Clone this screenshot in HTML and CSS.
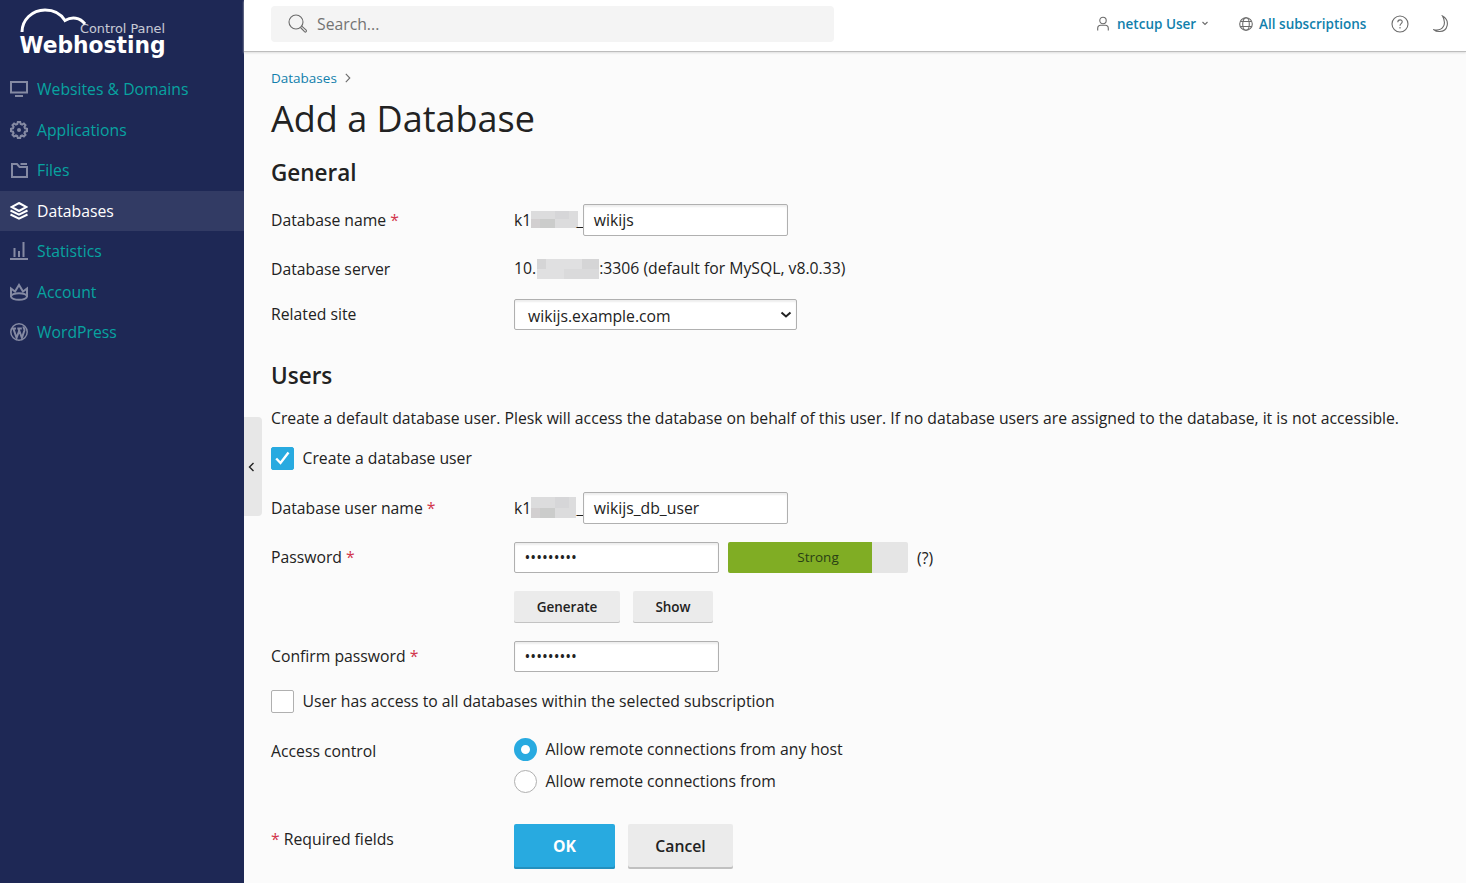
FILE: index.html
```html
<!DOCTYPE html>
<html lang="en">
<head>
<meta charset="utf-8">
<title>Add a Database</title>
<link rel="stylesheet" href="styles.css">
</head>
<body>
<div class="app">
  <aside class="sidebar">
    <svg class="logo" width="180" height="69" viewBox="0 0 180 69">
      <path d="M22 32C22 20 32 10 45 10C55 10 61 14 65 20.500C72 16.500 80 17.500 85 24" fill="none" stroke="#fff" stroke-width="3"/>
      <text class="logo-small" x="80" y="33" textLength="85" lengthAdjust="spacingAndGlyphs">Control Panel</text>
      <text class="logo-big" x="19.500" y="52.500" textLength="146" lengthAdjust="spacingAndGlyphs">Webhosting</text>
    </svg>
    <nav class="nav">
      <a class="nav-item"><svg class="nav-icon" viewBox="0 0 18 18"><path d="M1 2h16v10.500H1zM5 16h8"/></svg>Websites &amp; Domains</a>
      <a class="nav-item"><svg class="nav-icon" viewBox="0 0 18 18"><path d="M7.300 3 7.800 1h2.400l.5 2 1.400.6 1.800-1.100 1.600 1.600-1.100 1.800.6 1.400 2 .5v2.400l-2 .5-.6 1.400 1.100 1.800-1.600 1.600-1.800-1.100-1.400.6-.5 2H7.800l-.5-2-1.400-.6-1.800 1.100-1.600-1.600 1.100-1.800L3 10.700l-2-.5V7.800l2-.5.6-1.400-1.100-1.800 1.600-1.600 1.800 1.100z"/><circle cx="9" cy="9" r="2" fill="currentColor" stroke="none"/></svg>Applications</a>
      <a class="nav-item"><svg class="nav-icon" viewBox="0 0 18 18"><path d="M2 3h5l2.500 3H17v10H2zM10.500 3H17"/></svg>Files</a>
      <a class="nav-item active"><svg class="nav-icon" viewBox="0 0 18 18"><path d="m9 1 7.500 4L9 9 1.500 5zM.5 8.500 9 12.700l8.500-4.200M.5 12.500 9 16.700l8.500-4.200"/></svg>Databases</a>
      <a class="nav-item"><svg class="nav-icon" viewBox="0 0 18 18"><path d="M0 17h18M4.500 6v9M9 9v6M13.500 0v15"/></svg>Statistics</a>
      <a class="nav-item"><svg class="nav-icon" viewBox="0 0 18 18"><path d="M1 14V5.500l4 3L9 2l4 6.500 4-3V14"/><ellipse cx="9" cy="13.500" rx="8" ry="3.300"/></svg>Account</a>
      <a class="nav-item"><svg class="nav-icon" viewBox="0 0 18 18"><circle cx="9" cy="9" r="8.200" stroke-width="1.500"/><path d="M2 5.500h4M7.300 5.500h4.500M3.300 5.500l3.300 9.300L9.100 8M8.500 5.500l3.400 9.300 2.500-7.300c.5-1.700-1.200-2.400-.8-4"/></svg>WordPress</a>
    </nav>
  </aside>
  <div class="page">
    <header class="topbar">
      <div class="search"><svg width="20" height="20" viewBox="0 0 20 20"><circle cx="8" cy="8" r="7"/><path d="m12.500 13.500 4 4.200c1.200 1 2.600-.5 1.700-1.600l-4.400-3.900"/></svg>Search...</div>
      <div class="user"><svg width="12" height="16" viewBox="0 0 12 16"><circle cx="6" cy="4.500" r="3.200"/><path d="M.7 14.500v-2c0-2 1-3.200 3-3.200h4.600c2 0 3 1.200 3 3.200v2"/></svg><span>netcup User</span><svg class="caret" width="6" height="5" viewBox="0 0 6 5"><path d="m.5 1 2.500 2.500L5.500 1"/></svg></div>
      <div class="subs"><svg width="14" height="14" viewBox="0 0 14 14"><circle cx="7" cy="7" r="6.300"/><ellipse cx="7" cy="7" rx="3.300" ry="6.300"/><path d="M1.500 4.500h11M1.500 9.500h11"/></svg><span>All subscriptions</span></div>
      <svg class="help" width="18" height="18" viewBox="0 0 18 18"><circle cx="9" cy="9" r="8"/><path d="M6.800 7.300C6.800 4 11.500 4.300 11.200 7 11 8.700 9 8.700 9 10.700M9 12v1.400"/></svg>
      <svg class="moon" width="16" height="18" viewBox="0 0 16 18"><path d="M9.500 1c8 4.500 5.500 16-3.500 15.500-2 0-3.800-.6-5-1.700C10 16.500 14 9 9.500 1z"/></svg>
    </header>
    <div class="collapse"><svg width="7" height="10" viewBox="0 0 7 10"><path d="M5.500 1 1.500 5l4 4"/></svg></div>
    <main class="content">
      <div class="crumbs"><a>Databases</a><svg width="6" height="10" viewBox="0 0 6 10"><path d="m.8.8 4 4.200-4 4.200"/></svg></div>
      <h1>Add a Database</h1>
      <h2>General</h2>
      <div class="row name-row">
        <label>Database name <i>*</i></label>
        <div class="field"><span>k1</span><span class="mask mask-name"><b></b><b></b><b></b><b></b><b></b><b></b><b></b><b></b></span><span class="under">_</span><div class="input">wikijs</div></div>
      </div>
      <div class="row server-row">
        <label>Database server</label>
        <div class="field"><span>10.</span><span class="mask mask-server"><b></b><b></b><b></b><b></b><b></b><b></b><b></b><b></b></span><span>:3306 (default for MySQL, v8.0.33)</span></div>
      </div>
      <div class="row site-row">
        <label>Related site</label>
        <div class="input select"><span>wikijs.example.com</span><svg width="12" height="8" viewBox="0 0 12 8"><path d="m1.500 1.500 4.500 4 4.500-4"/></svg></div>
      </div>
      <h2 class="users-title">Users</h2>
      <p class="intro">Create a default database user. Plesk will access the database on behalf of this user. If no database users are assigned to the database, it is not accessible.</p>
      <div class="check"><span class="box checked"><svg width="15" height="14" viewBox="0 0 15 14"><path d="m1.200 7.500 4.300 4.500 8-10.500"/></svg></span><span class="caption">Create a database user</span></div>
      <div class="row username-row">
        <label>Database user name <i>*</i></label>
        <div class="field"><span>k1</span><span class="mask mask-user"><b></b><b></b><b></b><b></b><b></b><b></b><b></b><b></b></span><span class="under">_</span><div class="input">wikijs_db_user</div></div>
      </div>
      <div class="row pass-row">
        <label>Password <i>*</i></label>
        <div class="field"><div class="input dots">•••••••••</div><div class="meter"><span>Strong</span></div><span class="hint">(?)</span></div>
      </div>
      <div class="row button-row">
        <div></div>
        <div class="field"><button class="generate">Generate</button><button class="show">Show</button></div>
      </div>
      <div class="row pass-row">
        <label>Confirm password <i>*</i></label>
        <div class="field"><div class="input dots">•••••••••</div></div>
      </div>
      <div class="check all-check"><span class="box"></span><span class="caption">User has access to all databases within the selected subscription</span></div>
      <div class="row access-row">
        <label>Access control</label>
        <div class="radios">
          <div class="radio"><span class="circle on"></span><span class="caption">Allow remote connections from any host</span></div>
          <div class="radio"><span class="circle"></span><span class="caption">Allow remote connections from</span></div>
        </div>
      </div>
      <div class="row submit-row">
        <label><i>*</i> Required fields</label>
        <div class="field"><button class="ok">OK</button><button class="cancel">Cancel</button></div>
      </div>
    </main>
  </div>
</div>
</body>
</html>
```
FILE: styles.css
```css
* { box-sizing: border-box; }
body { margin: 0; background: #fbfbfb; color: #222; font: 15.75px/24px "Open Sans", sans-serif; }
svg { fill: none; stroke: #6b6b6b; stroke-width: 1.1; flex: none; }
.app { display: flex; width: 1466px; height: 883px; overflow: hidden; }
.sidebar { width: 244px; flex: none; background: #1e2855; }
.logo { display: block; }
.logo text { fill: #fff; stroke: none; }
.logo-small { font: 11.5px "DejaVu Sans", sans-serif; opacity: .75; }
.logo-big { font: bold 23px "DejaVu Sans", sans-serif; }
.nav-item { display: flex; align-items: center; gap: 9px; height: 40.5px; padding-left: 10px; color: #08a3a0; }
.nav-icon { width: 18px; height: 18px; color: #858aa3; stroke: currentColor; stroke-width: 2; }
.nav-item.active { color: #fff; background: #323b64; }
.active .nav-icon { color: #fff; }
.page { position: relative; width: 1222px; }
.topbar { display: flex; align-items: center; height: 52px; padding: 0 17px 4px 27px; background: #fff; border-bottom: 1px solid #bdbdbd; box-shadow: 0 1px 2px #ddd; color: #117fac; font-size: 13.5px; font-weight: 600; }
.search { display: flex; align-items: center; gap: 9px; width: 563px; height: 36px; padding-left: 17px; border-radius: 4px; background: #f4f4f4; color: #737373; font-size: 15.75px; font-weight: 400; }
.user { display: flex; align-items: center; margin-left: 263px; }
.user span { margin: 0 6px 0 8px; }
.subs { display: flex; align-items: center; gap: 6px; margin-left: 31px; }
.help { margin: 1px 0 0 25px; }
.moon { margin-left: auto; }
.collapse { position: absolute; left: 0; top: 417px; display: grid; place-items: center; width: 18px; height: 99px; padding-right: 3px; background: #e7e7e7; border-radius: 0 4px 4px 0; }
.collapse svg { stroke: #222; stroke-width: 1.4; }
.content { padding: 16px 0 0 27px; }
.crumbs { display: flex; align-items: center; gap: 8px; height: 20px; color: #117fac; font-size: 13.5px; }
h1 { height: 48px; margin: 7px 0 15px; font-size: 36px; line-height: 48px; font-weight: 400; }
h2 { height: 28px; margin: 0; font-size: 22.5px; line-height: 30px; font-weight: 600; }
.row { display: grid; grid-template-columns: 243px 1fr; align-items: center; margin-top: 18px; }
i { color: #d2364c; font-style: normal; }
.field { display: flex; align-items: center; }
.name-row, .username-row, .button-row { height: 32px; }
.server-row { height: 25px; margin-top: 20px; }
.server-row .field { padding-bottom: 1px; }
.site-row, .pass-row { height: 31px; }
.site-row label, .pass-row label { padding-bottom: 2px; }
.username-row { margin-top: 22px; }
.input { width: 205px; height: 32px; padding: 0 9.5px; border: 1px solid #b0b0b0; border-radius: 2px; background: #fff; box-shadow: inset 0 2px 2px #eee; line-height: 30px; }
.pass-row .input { height: 31px; line-height: 29px; }
.select { display: flex; align-items: center; justify-content: space-between; width: 283px; height: 31px; padding: 2px 4px 0 13px; }
.select svg { stroke: #222; stroke-width: 2; margin-bottom: 2px; }
.mask { display: grid; grid-template-columns: 9px 15px 14px 1fr; grid-template-rows: 1fr 1fr; overflow: hidden; }
.mask-name { width: 47px; height: 17px; margin-bottom: 2px; }
.mask-user { width: 45px; height: 21px; margin: 0 2px 1px 0; }
.mask-server { width: 62px; height: 20px; margin: 1px 0 0 1px; grid-template-columns: 9px 18px 18px 1fr; }
.mask b { background: #dcdcdd; }
.mask b:nth-child(3n) { background: #d6d6d8; }
.mask b:nth-child(5) { background: #d2cfd0; }
.mask b:nth-child(6) { background: #cbcccb; }
.mask-server b:nth-child(n) { background: #e0e0e1; }
.mask-server b:nth-child(1), .mask-server b:nth-child(4) { background: #d5d5d6; }
.mask-server b:nth-child(n+7) { background: #dadadb; }
.under { width: 5px; overflow: visible; direction: rtl; }
.users-title { margin-top: 31px; }
.intro { margin: 17px 0; white-space: nowrap; }
.check { display: flex; align-items: center; gap: 8.5px; height: 23px; }
.caption { padding-bottom: 2px; }
.box { display: grid; place-items: center; width: 23px; height: 23px; border: 1px solid #b0b0b0; border-radius: 2px; background: #fff; }
.checked { border-color: #28aae0; background: #28aae0; }
.checked svg { stroke: #fff; stroke-width: 2.4; margin-bottom: 2px; }
.dots { font-size: 15.5px; }
.meter { width: 180px; height: 31px; margin: 0 9px; border-radius: 2px; background: linear-gradient(90deg, #80ad24 144px, #e5e5e5 144px); color: #294015; font-size: 13.5px; line-height: 30px; text-align: center; }
.hint { padding-top: 1px; }
button { border: 0; border-radius: 2px; padding: 0; background: #ebebeb; color: #222; box-shadow: inset 0 -1px #c3c3c3; font: 600 13.5px "Open Sans", sans-serif; }
.generate { width: 106px; height: 32px; margin-right: 13px; }
.show { width: 80px; height: 32px; }
.all-check { margin-top: 18px; }
.access-row { margin-top: 25px; align-items: start; }
.access-row label { padding-top: 1px; }
.radios { display: grid; gap: 9px; }
.radio { display: flex; align-items: center; gap: 8.5px; height: 23px; }
.circle { width: 23px; height: 23px; border: 1px solid #b0b0b0; border-radius: 50%; background: #fff; }
.circle.on { border: 7px solid #28aae0; }
.submit-row { height: 45px; margin-top: 31px; }
.submit-row label { padding-bottom: 15px; }
.ok, .cancel { height: 45px; padding-bottom: 2px; font-size: 15.75px; box-shadow: inset 0 -2px #c0c0c0; }
.ok { width: 101px; margin-right: 13px; background: #28aae0; color: #fff; font-weight: 700; box-shadow: inset 0 -2px #2390be; }
.cancel { width: 105px; }
```
